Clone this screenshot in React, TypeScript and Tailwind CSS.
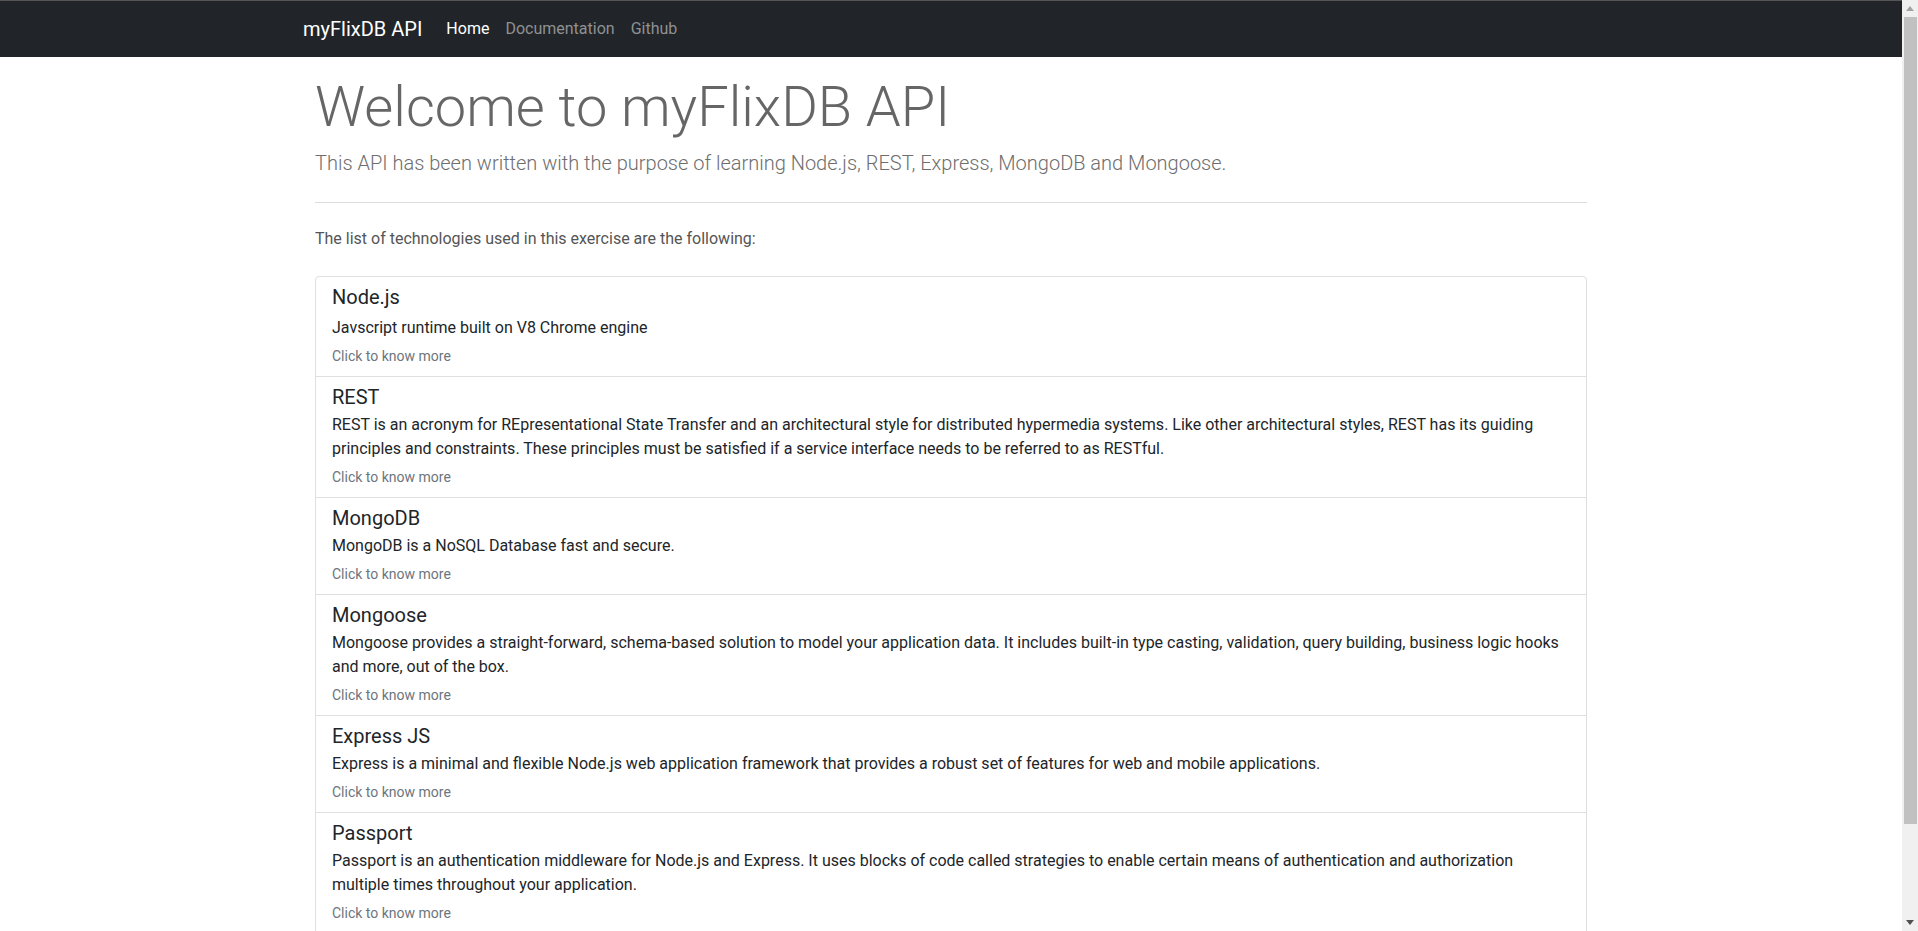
import React from "react";

const techs = [
  {
    title: "Node.js",
    text: "Javscript runtime built on V8 Chrome engine",
    gap: "mb-[7px]",
  },
  {
    title: "REST",
    text: "REST is an acronym for REpresentational State Transfer and an architectural style for distributed hypermedia systems. Like other architectural styles, REST has its guiding principles and constraints. These principles must be satisfied if a service interface needs to be referred to as RESTful.",
    gap: "mb-1",
  },
  {
    title: "MongoDB",
    text: "MongoDB is a NoSQL Database fast and secure.",
    gap: "mb-1",
  },
  {
    title: "Mongoose",
    text: "Mongoose provides a straight-forward, schema-based solution to model your application data. It includes built-in type casting, validation, query building, business logic hooks and more, out of the box.",
    gap: "mb-1",
  },
  {
    title: "Express JS",
    text: "Express is a minimal and flexible Node.js web application framework that provides a robust set of features for web and mobile applications.",
    gap: "mb-1",
  },
  {
    title: "Passport",
    text: "Passport is an authentication middleware for Node.js and Express. It uses blocks of code called strategies to enable certain means of authentication and authorization multiple times throughout your application.",
    gap: "mb-1",
  },
];

export default function App() {
  return (
    <div
      className="flex h-[931px] w-full overflow-hidden bg-white"
      style={{ fontFamily: "Roboto, 'Liberation Sans', sans-serif" }}
    >
      <div className="flex min-w-0 flex-1 flex-col overflow-hidden">
        <div className="h-px w-full shrink-0 bg-[#555555]" />
        <nav className="h-[56px] w-full shrink-0 bg-[#212529]">
          <div className="mx-auto flex h-full w-[1296px] items-center">
            <span className="mr-4 text-[20px] leading-[30px] text-white">myFlixDB API</span>
            <span className="px-2 text-[16px] leading-6 text-white">Home</span>
            <span className="px-2 text-[16px] leading-6 text-[#8f9193]">Documentation</span>
            <span className="px-2 text-[16px] leading-6 text-[#8f9193]">Github</span>
          </div>
        </nav>
        <main className="mx-auto w-[1272px] shrink-0">
          <h1 className="mt-[17px] text-[56px] font-light leading-[67px] text-[#666666]">
            Welcome to myFlixDB API
          </h1>
          <p className="mt-[7px] text-[20px] font-light leading-[30px] text-[#6e6e6e]">
            This API has been written with the purpose of learning Node.js, REST, Express, MongoDB and Mongoose.
          </p>
          <div className="mt-6 h-px w-full bg-[#dcdcdc]" />
          <p className="mt-6 text-[16px] leading-6 text-[#555555]">
            The list of technologies used in this exercise are the following:
          </p>
          <div className="mt-[25px] rounded-t-[4px] border border-[#dfdfdf]">
            {techs.map((t, i) => (
              <div
                key={t.title}
                className={`px-4 pb-[9px] pt-[8px] ${i > 0 ? "border-t border-[#dfdfdf]" : ""}`}
              >
                <h5 className={`text-[20px] leading-6 text-[#212529] ${t.gap}`}>{t.title}</h5>
                <p className="text-[16px] leading-6 text-[#212529]">{t.text}</p>
                <p className="mt-1.5 text-[14px] leading-[21px] text-[#6c757d]">Click to know more</p>
              </div>
            ))}
          </div>
        </main>
      </div>
      <div className="flex h-full w-[16px] shrink-0 flex-col items-center bg-[#f0f0f0]">
        <div className="flex h-[17px] w-full items-center justify-center">
          <svg width="8" height="5" viewBox="0 0 8 5">
            <polygon points="4,0 8,5 0,5" fill="#a3a3a3" />
          </svg>
        </div>
        <div className="ml-px h-[807px] w-[13px] bg-[#c1c1c1]" />
        <div className="flex-1" />
        <div className="flex h-[17px] w-full items-center justify-center">
          <svg width="8" height="5" viewBox="0 0 8 5">
            <polygon points="0,0 8,0 4,5" fill="#505050" />
          </svg>
        </div>
      </div>
    </div>
  );
}
